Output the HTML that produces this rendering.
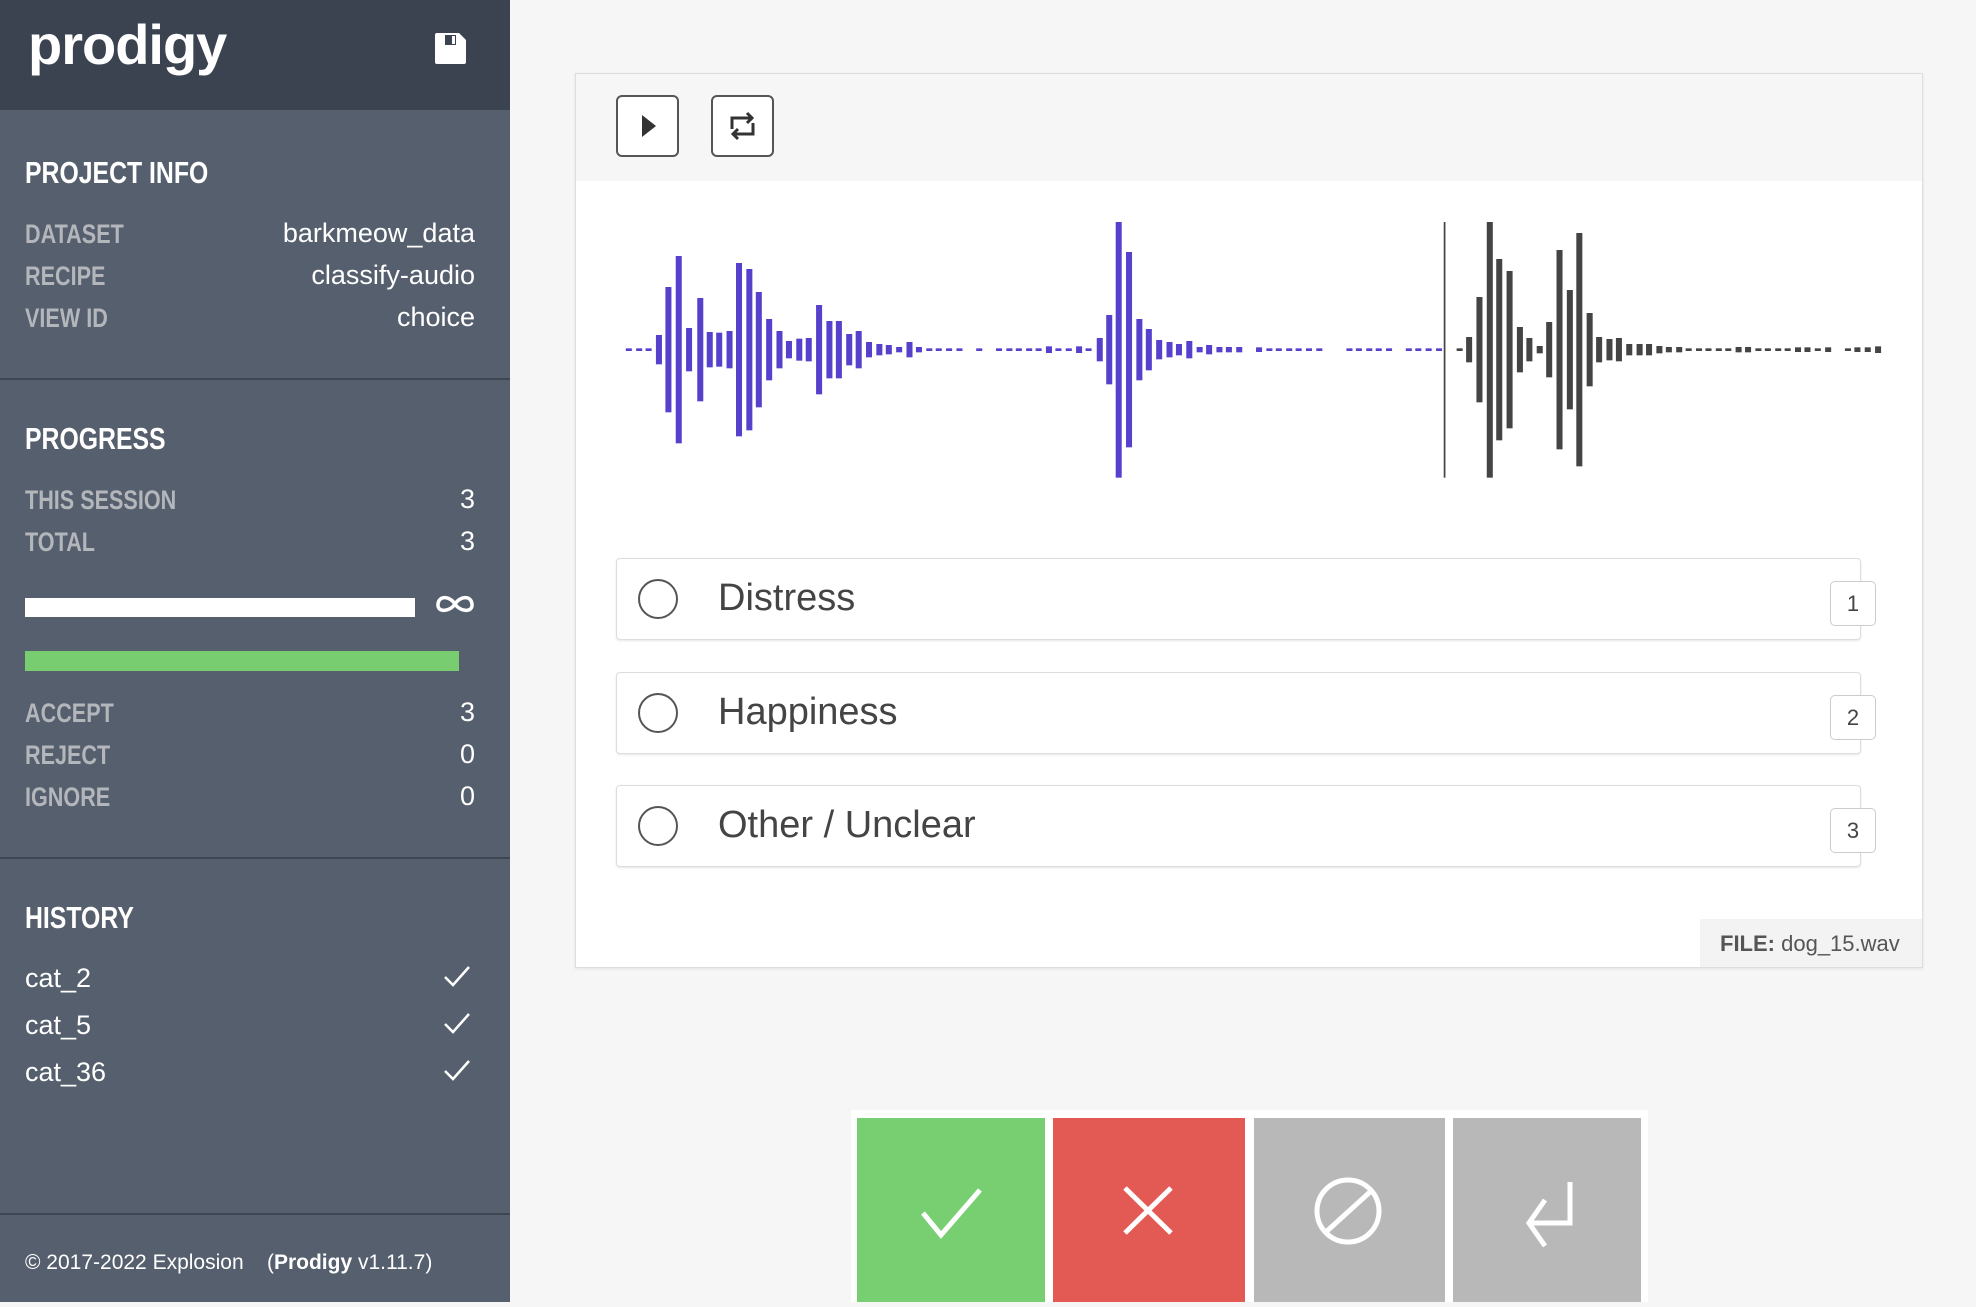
<!DOCTYPE html>
<html><head><meta charset="utf-8"><style>
*{margin:0;padding:0;box-sizing:border-box}
body{width:1976px;height:1302px;background:#f6f6f6;font-family:"Liberation Sans",sans-serif;position:relative;overflow:hidden}
.sb{position:absolute;left:0;top:0;width:510px;height:1302px;background:#565f6d;color:#fff}
.hd{position:absolute;left:0;top:0;width:510px;height:110px;background:#3b4350}
.logo{position:absolute;left:28px;top:12px;font-size:56px;font-weight:bold;letter-spacing:-1px}
.h{position:absolute;left:25px;font-weight:bold;font-size:31px;transform:scaleX(0.8);transform-origin:left;white-space:nowrap}
.k{position:absolute;left:25px;font-weight:bold;font-size:27px;color:#b3b6ba;transform:scaleX(0.8);transform-origin:left;white-space:nowrap}
.v{position:absolute;right:35px;font-size:27px;color:#fff}
.dv{position:absolute;left:0;width:510px;height:2px;background:#3f4651}
.hi{position:absolute;left:25px;font-size:27px}
.ck{position:absolute;left:443px}
.card{position:absolute;left:575px;top:73px;width:1348px;height:895px;background:#fff;border:1px solid #ddd;box-shadow:0 1px 3px rgba(0,0,0,.08)}
.tb{position:absolute;left:0;top:0;width:100%;height:107px;background:#f6f6f6}
.btn{position:absolute;top:21px;width:63px;height:62px;border:2px solid #555;border-radius:6px;background:#fff}
.opt{position:absolute;left:40px;width:1245px;height:82px;border:1px solid #ddd;border-radius:4px;background:#fff;box-shadow:0 1px 2px rgba(0,0,0,.1)}
.opt .r{position:absolute;left:21px;top:20px;width:40px;height:40px;border:2px solid #555;border-radius:50%}
.opt .t{position:absolute;left:101px;top:18px;font-size:38px;color:#444}
.opt .n{position:absolute;left:1213px;top:22px;width:46px;height:45px;border:1px solid #ccc;border-radius:5px;background:#fff;font-size:22px;color:#444;text-align:center;line-height:43px}
.file{position:absolute;right:0;bottom:0;width:222px;height:48px;background:#f3f3f3;font-size:22px;color:#555;padding:12px 0 0 20px}
.bb{position:absolute;top:1118px;height:184px}
</style></head><body>
<div class="sb">
<div class="hd"><div class="logo">prodigy</div>
<svg style="position:absolute;left:434px;top:32px" width="33" height="33" viewBox="0 0 33 33"><path d="M3 1h22l7 7v22a2 2 0 0 1-2 2H3a2 2 0 0 1-2-2V3a2 2 0 0 1 2-2z" fill="#fff"/><rect x="11" y="3" width="11" height="10" fill="#3b4350"/><rect x="18" y="4" width="3" height="8" fill="#fff"/></svg></div>
<div class="h" style="top:155px">PROJECT INFO</div>
<div class="k" style="top:219px">DATASET</div><div class="v" style="top:218px">barkmeow_data</div>
<div class="k" style="top:261px">RECIPE</div><div class="v" style="top:260px">classify-audio</div>
<div class="k" style="top:303px">VIEW ID</div><div class="v" style="top:302px">choice</div>
<div class="dv" style="top:378px"></div>
<div class="h" style="top:421px">PROGRESS</div>
<div class="k" style="top:485px">THIS SESSION</div><div class="v" style="top:484px">3</div>
<div class="k" style="top:527px">TOTAL</div><div class="v" style="top:526px">3</div>
<div style="position:absolute;left:25px;top:598px;width:390px;height:19px;background:#fff"></div>
<svg style="position:absolute;left:434px;top:592px" width="42" height="24" viewBox="0 0 42 24"><path d="M21 12C16 4 5 3 4 12s12 8 17 0 16-9 17 0-12 8-17 0z" fill="none" stroke="#fff" stroke-width="3.5"/></svg>
<div style="position:absolute;left:25px;top:651px;width:434px;height:20px;background:#77cd6f"></div>
<div class="k" style="top:698px">ACCEPT</div><div class="v" style="top:697px">3</div>
<div class="k" style="top:740px">REJECT</div><div class="v" style="top:739px">0</div>
<div class="k" style="top:782px">IGNORE</div><div class="v" style="top:781px">0</div>
<div class="dv" style="top:857px"></div>
<div class="h" style="top:900px">HISTORY</div>
<div class="hi" style="top:963px">cat_2</div><svg class="ck" style="top:964px" width="28" height="24"><path d="M2 13l8 8L26 3" fill="none" stroke="#fff" stroke-width="2.5"/></svg>
<div class="hi" style="top:1010px">cat_5</div><svg class="ck" style="top:1011px" width="28" height="24"><path d="M2 13l8 8L26 3" fill="none" stroke="#fff" stroke-width="2.5"/></svg>
<div class="hi" style="top:1057px">cat_36</div><svg class="ck" style="top:1058px" width="28" height="24"><path d="M2 13l8 8L26 3" fill="none" stroke="#fff" stroke-width="2.5"/></svg>
<div class="dv" style="top:1213px"></div>
<div style="position:absolute;left:25px;top:1251px;font-size:21px">© 2017-2022 Explosion &nbsp;&nbsp;&nbsp;(<b>Prodigy</b> v1.11.7)</div>
</div>

<div class="card">
<div class="tb">
<div class="btn" style="left:40px"><svg width="59" height="58"><path d="M24 18v22l14-11z" fill="#333"/></svg></div>
<div class="btn" style="left:135px"><svg width="59" height="58"><path d="M19 32V21h19M34 16l5 5-5 5M40 26v11H21M25 32l-5 5 5 5" fill="none" stroke="#333" stroke-width="3"/></svg></div>
</div>
<svg style="position:absolute;left:-1px;top:-3px" width="1350" height="430" viewBox="0 0 1568 1290" preserveAspectRatio="none">
<g fill="#5541cc" id="p">
<rect x="94" y="792" width="7" height="88"/><rect x="105" y="648" width="7" height="376"/><rect x="117" y="555" width="7" height="562"/><rect x="129" y="771" width="7" height="130"/><rect x="142" y="681" width="7" height="310"/><rect x="153" y="783" width="7" height="106"/><rect x="164" y="785" width="7" height="102"/><rect x="176" y="780" width="7" height="112"/><rect x="187" y="576" width="7" height="520"/><rect x="199" y="594" width="7" height="484"/><rect x="210" y="663" width="7" height="346"/><rect x="222" y="744" width="7" height="184"/><rect x="234" y="780" width="7" height="112"/><rect x="245" y="810" width="7" height="52"/><rect x="257" y="803" width="7" height="66"/><rect x="268" y="801" width="7" height="70"/><rect x="280" y="702" width="7" height="268"/><rect x="292" y="750" width="7" height="172"/><rect x="303" y="750" width="7" height="172"/><rect x="315" y="789" width="7" height="94"/><rect x="326" y="780" width="7" height="112"/><rect x="338" y="813" width="7" height="46"/><rect x="350" y="819" width="7" height="34"/><rect x="361" y="822" width="7" height="28"/><rect x="373" y="828" width="7" height="16"/><rect x="385" y="813" width="7" height="46"/><rect x="396" y="828" width="7" height="16"/>
<rect x="606" y="801" width="7" height="70"/><rect x="617" y="732" width="7" height="208"/><rect x="628" y="453" width="7" height="767"/><rect x="640" y="543" width="7" height="586"/><rect x="652" y="744" width="7" height="184"/><rect x="663" y="774" width="7" height="124"/><rect x="675" y="807" width="7" height="58"/><rect x="687" y="813" width="7" height="46"/><rect x="698" y="819" width="7" height="34"/><rect x="710" y="810" width="7" height="52"/><rect x="722" y="828" width="7" height="16"/><rect x="733" y="822" width="7" height="28"/><rect x="745" y="828" width="7" height="16"/><rect x="756" y="828" width="7" height="16"/><rect x="768" y="828" width="7" height="16"/>
<g transform="translate(0,832)">
<rect x="59" width="7" height="8"/><rect x="71" width="7" height="8"/><rect x="82" width="7" height="8"/><rect x="408" width="7" height="8"/><rect x="419" width="7" height="8"/><rect x="431" width="7" height="8"/><rect x="443" width="7" height="8"/><rect x="466" width="7" height="8"/><rect x="489" width="7" height="8"/><rect x="501" width="7" height="8"/><rect x="512" width="7" height="8"/><rect x="524" width="7" height="8"/><rect x="535" width="7" height="8"/><rect x="547" y="-6" width="7" height="20"/><rect x="558" width="7" height="8"/><rect x="570" width="7" height="8"/><rect x="582" y="-6" width="7" height="20"/><rect x="593" width="7" height="8"/><rect x="791" y="-3" width="7" height="14"/><rect x="803" width="7" height="8"/><rect x="814" width="7" height="8"/><rect x="826" width="7" height="8"/><rect x="837" width="7" height="8"/><rect x="849" width="7" height="8"/><rect x="861" width="7" height="8"/><rect x="896" width="7" height="8"/><rect x="907" width="7" height="8"/><rect x="919" width="7" height="8"/><rect x="930" width="7" height="8"/><rect x="942" width="7" height="8"/><rect x="965" width="7" height="8"/><rect x="976" width="7" height="8"/><rect x="988" width="7" height="8"/><rect x="1000" width="7" height="8"/>
</g></g>
<g fill="#444">
<rect x="1009" y="453" width="2" height="767"/>
<rect x="1035" y="798" width="7" height="76"/><rect x="1047" y="678" width="7" height="316"/><rect x="1059" y="453" width="7" height="767"/><rect x="1070" y="564" width="7" height="544"/><rect x="1082" y="600" width="7" height="472"/><rect x="1094" y="768" width="7" height="136"/><rect x="1105" y="801" width="7" height="70"/><rect x="1117" y="825" width="7" height="22"/><rect x="1128" y="753" width="7" height="166"/><rect x="1140" y="537" width="7" height="598"/><rect x="1152" y="657" width="7" height="358"/><rect x="1163" y="486" width="7" height="700"/><rect x="1175" y="726" width="7" height="220"/><rect x="1186" y="798" width="7" height="76"/><rect x="1198" y="804" width="7" height="64"/><rect x="1209" y="801" width="7" height="70"/><rect x="1221" y="819" width="7" height="34"/><rect x="1233" y="819" width="7" height="34"/><rect x="1244" y="819" width="7" height="34"/><rect x="1256" y="825" width="7" height="22"/><rect x="1267" y="828" width="7" height="16"/><rect x="1279" y="828" width="7" height="16"/>
<g transform="translate(0,832)"><rect x="1024" width="7" height="8"/><rect x="1290" width="7" height="8"/><rect x="1302" width="7" height="8"/><rect x="1313" width="7" height="8"/><rect x="1325" width="7" height="8"/><rect x="1336" width="7" height="8"/><rect x="1348" y="-4" width="7" height="16"/><rect x="1359" y="-4" width="7" height="16"/><rect x="1371" width="7" height="8"/><rect x="1382" width="7" height="8"/><rect x="1394" width="7" height="8"/><rect x="1405" width="7" height="8"/><rect x="1417" y="-3" width="7" height="14"/><rect x="1428" y="-3" width="7" height="14"/><rect x="1440" width="7" height="8"/><rect x="1452" y="-3" width="7" height="14"/><rect x="1475" width="7" height="8"/><rect x="1486" y="-3" width="7" height="14"/><rect x="1498" y="-3" width="7" height="14"/><rect x="1510" y="-6" width="7" height="20"/></g>
</g></svg>
<div class="opt" style="top:484px"><div class="r"></div><div class="t">Distress</div><div class="n">1</div></div>
<div class="opt" style="top:598px"><div class="r"></div><div class="t">Happiness</div><div class="n">2</div></div>
<div class="opt" style="top:711px"><div class="r"></div><div class="t">Other / Unclear</div><div class="n">3</div></div>
<div class="file"><b>FILE:</b> dog_15.wav</div>
</div>

<div style="position:absolute;left:851px;top:1110px;width:797px;height:192px;background:#fff"></div>
<div class="bb" style="left:857px;width:188px;background:#78cf72"><svg width="188" height="184"><path d="M66 95l18 22 39-45" fill="none" stroke="#fff" stroke-width="5"/></svg></div>
<div class="bb" style="left:1053px;width:192px;background:#e35a54"><svg width="192" height="184"><path d="M72 70l46 45M118 70l-46 45" fill="none" stroke="#fff" stroke-width="5"/></svg></div>
<div class="bb" style="left:1254px;width:191px;background:#b8b8b8"><svg width="191" height="184"><circle cx="94" cy="93" r="31" fill="none" stroke="#fff" stroke-width="5"/><path d="M116 74l-43 39" stroke="#fff" stroke-width="5"/></svg></div>
<div class="bb" style="left:1453px;width:188px;background:#b8b8b8"><svg width="188" height="184"><path d="M117 64v41H76M92 82l-16 23 16 23" fill="none" stroke="#fff" stroke-width="5"/></svg></div>
</body></html>
